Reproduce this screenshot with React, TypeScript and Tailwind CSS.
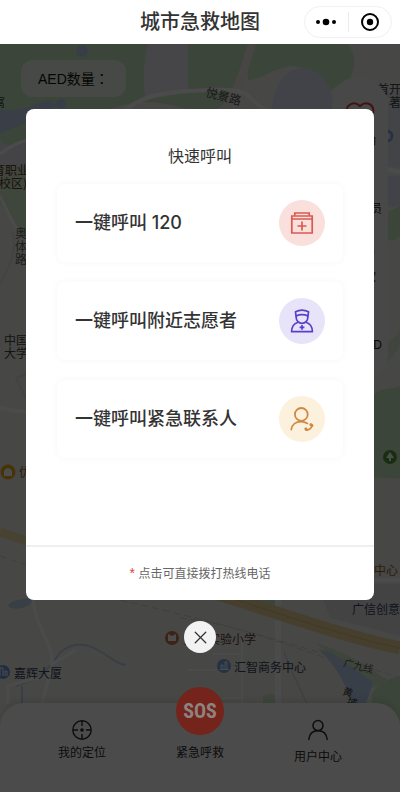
import { Heart, UserRound, Wallet, MapPin, X } from "lucide-react";

const Capsule = () => (
  <div className="mr-2 flex h-8 w-22 items-center justify-self-end rounded-full border border-[#f1f1f1] bg-white">
    <button aria-label="更多" className="flex flex-1 items-center justify-center">
      <svg width="20" height="8" viewBox="0 0 20 8" fill="#000">
        <circle cx="2" cy="4" r="2" />
        <circle cx="10" cy="4" r="3.3" />
        <circle cx="18" cy="4" r="2" />
      </svg>
    </button>
    <span className="h-5 w-px bg-[#ececec]" />
    <button aria-label="关闭小程序" className="flex flex-1 items-center justify-center">
      <svg width="20" height="20" viewBox="0 0 20 20">
        <circle cx="10" cy="10" r="8" fill="none" stroke="#000" strokeWidth="2" />
        <circle cx="10" cy="10" r="3.2" fill="#000" />
      </svg>
    </button>
  </div>
);

const CityMap = () => (
  <svg
    className="absolute inset-0 h-full w-full font-['Noto_Sans_CJK_SC',sans-serif]"
    viewBox="0 44 400 748"
    preserveAspectRatio="xMidYMin slice"
    fontSize="12"
    fill="#444"
  >
    <rect y="44" width="400" height="748" fill="#efeee8" />
    {/* parks */}
    <path d="M0 44H252C243 68 237 88 228 100C205 130 170 90 120 106C80 118 50 140 26 145L0 155Z" fill="#c9e8c0" />
    <path d="M254 44H348C356 54 356 70 350 78C340 82 334 88 330 92C322 84 308 66 292 66C272 68 262 80 248 80C246 68 250 54 254 44Z" fill="#c9e8c0" />
    <path d="M0 168L26 160V240C18 232 8 214 0 204Z" fill="#d3e9c9" />
    <path d="M384 214L400 206V236C392 244 386 240 384 232Z" fill="#c9e8c0" />
    <path d="M372 396C382 386 392 390 400 386V478C390 480 382 476 372 478Z" fill="#c9e8c0" />
    <path d="M372 348C382 342 390 346 400 330V344C394 360 382 366 372 370Z" fill="#d8eccf" />
    <path d="M240 597H275V605L250 602Z" fill="#c9e8c0" />
    <path d="M372 694C380 680 392 678 400 676V720H372Z" fill="#c9e8c0" />
    <path d="M316 643C340 650 368 664 388 682L373 688L340 664Z" fill="#cfe9c6" />
    <path d="M263 696Q269 692 275 695V708H263Z" fill="#d0eac6" />
    {/* blocks */}
    <path d="M148 44H188V92L146 100C142 80 144 60 148 44Z" fill="#e9ebf5" />
    <path d="M272 112C272 84 288 66 306 68C322 72 332 84 334 112Z" fill="#dcdff0" />
    <path d="M380 94L400 90V168L380 166Z" fill="#e0e5f2" />
    <path d="M384 176H400V206L384 208Z" fill="#dddff0" />
    <path d="M0 140C8 150 18 142 26 142V168L0 166Z" fill="#e4e5ee" />
    <path d="M318 584H400V636L330 618Z" fill="#e2e2e4" />
    {/* water */}
    <path d="M0 110C20 112 34 104 48 100L58 105C40 116 20 126 0 134Z" fill="#c3d1ec" />
    <circle cx="82" cy="51" r="6" fill="#bcd0ee" />
    <circle cx="61" cy="104" r="5" fill="#bcd0ee" />
    <path d="M8 605C14 598 24 600 34 598C30 608 20 610 10 608Z" fill="#bcd4ee" />
    <path d="M318 649L332 653L373 682L364 710H354C348 688 336 664 318 649Z" fill="#bdd2f2" />
    <path d="M16 686C34 680 46 674 56 658C66 642 84 642 98 650S116 664 126 665M22 686V704" fill="none" stroke="#bcd2ec" strokeWidth="2" />
    <path d="M284 652C292 674 300 688 308 706" fill="none" stroke="#ccd8ea" strokeWidth="1.5" />
    {/* roads */}
    <g fill="none" stroke="#fdfcfc" strokeWidth="4">
      <path d="M252 44C244 70 238 92 224 110" strokeWidth="8" stroke="#eeeae4" />
      <path d="M118 116C140 96 156 92 208 90S240 98 270 112" />
      <path d="M344 92L400 102" stroke="#f4f4f2" />
      <path d="M0 154C10 146 18 142 28 140M0 196C8 214 14 224 20 234" strokeWidth="3" />
      <path d="M0 408C10 410 18 412 28 411" />
      <path d="M372 166L400 172" />
      <path d="M33 598C34 624 54 646 52 664C50 676 46 686 42 704M52 664L76 650M8 704V686L50 674" strokeWidth="3" />
      <path d="M278 597V708" strokeWidth="6" />
      <path d="M188 670H216M242 640V708M212 654H242M222 698H242" strokeWidth="2" />
      <path d="M372 580H400" />
      <path d="M12 232C18 250 8 270 0 284M26 374L16 378L26 398" strokeWidth="2" stroke="#e0e0e0" />
    </g>
    <path d="M0 532L26 541" stroke="#efdda6" strokeWidth="9" />
    <path d="M205 590C265 608 340 636 400 648" fill="none" stroke="#ecd39a" strokeWidth="13" />
    <path d="M205 590C265 608 340 636 400 648" fill="none" stroke="#dfba74" strokeWidth="1" />
    <path d="M120 600C180 614 260 632 400 678M180 618C240 624 300 650 400 684M0 556L26 565" fill="none" stroke="#d2d2d2" strokeWidth="1" strokeDasharray="7 4" />
    {/* place names */}
    <text x="-7" y="107">寓</text>
    <text x="-7" y="175" fill="#5b392e">育职业</text>
    <text x="-5" y="188" fill="#5b392e">(校区)</text>
    <text x="15" y="238" fill="#666">奥</text>
    <text x="15" y="251" fill="#666">体</text>
    <text x="15" y="264" fill="#666">路</text>
    <text x="4" y="345">中国</text>
    <text x="4" y="358">大学</text>
    <text x="19" y="477" fill="#94642c">优</text>
    <text x="205" y="96" transform="rotate(15 205 96)" fill="#555">悦景路</text>
    <text x="377" y="94">首开</text>
    <text x="389" y="107">著</text>
    <text x="14" y="678" fill="#36435c">嘉辉大厦</text>
    <text x="184" y="644" fill="#573c32">天河实验小学</text>
    <text x="234" y="672" fill="#36435c">汇智商务中心</text>
    <text x="374" y="575" fill="#94642c">中心</text>
    <text x="352" y="614" fill="#36435c">广信创意</text>
    <text x="343" y="666" fontSize="10" transform="rotate(14 343 666)" fill="#555">广九线</text>
    <text x="342" y="694" fontSize="10" transform="rotate(20 342 694)">黄</text>
    <text x="346" y="704" fontSize="10" transform="rotate(20 346 704)">埔</text>
    {/* markers */}
    <circle cx="8" cy="472" r="7.5" fill="#f0ac20" />
    <path d="M4 476V471Q8 465 12 471V476Z" fill="#fff" />
    <circle cx="390" cy="457" r="7" fill="#4f9b38" />
    <path d="M390 452L394 458H391V461H389V458H386Z" fill="#fff" />
    <circle cx="172" cy="638" r="7" fill="#c5764e" />
    <path d="M168 634L172 636L176 634V641H168Z" fill="#fff" />
    <circle cx="3" cy="672" r="7" fill="#6d9be0" />
    <path d="M0 676V668H3V676M5 676V671H7V676" stroke="#fff" fill="none" />
    <circle cx="224" cy="666" r="7" fill="#7ca6e6" />
    <path d="M221 669V665H223V669M225 669V662H227V669M220 669.5H229" stroke="#fff" fill="none" />
    <circle cx="387" cy="136" r="5" fill="none" stroke="#86a6de" strokeWidth="3" />
  </svg>
);

const sideItems = [
  { label: "助", icon: Heart, color: "text-[#dc4040]", pad: "pr-3" },
  { label: "员", icon: UserRound, color: "text-[#5b45c9]", pad: "pr-1.5" },
  { label: "款", icon: Wallet, color: "text-[#d4924a]", pad: "pr-3" },
  { label: "D", icon: MapPin, color: "text-[#dc4040]", pad: "pr-1.5" },
];

const KitIcon = () => (
  <svg width="24" height="24" viewBox="0 0 24 24" fill="none" stroke="#da5a50" strokeWidth="1.7">
    <path d="M4.8 4.8V2H19.2V4.8" />
    <path d="M1.8 5H22.2V22H1.8ZM1.8 8H22.2" />
    <path d="M12 10.5V19.5M7.5 15H16.5" />
  </svg>
);

const NurseIcon = () => (
  <svg width="24" height="24" viewBox="0 0 24 24" fill="none" stroke="#5a3fcb" strokeWidth="1.7" strokeLinejoin="round">
    <path d="M6 7L5.5 2.8Q12 -.4 18.5 2.8L18 7Q12 4.2 6 7Z" />
    <path d="M6.2 7V8.5A5.8 5.8 0 0 0 17.8 8.5V7" />
    <path d="M8 13.2C4 14.5 1.6 18 1.6 22.7H22.4C22.4 18 20 14.5 16 13.2" />
    <path d="M12 15.9V20.7M9.6 18.3H14.4" />
  </svg>
);

const ContactIcon = () => (
  <svg width="24" height="24" viewBox="0 0 24 24" fill="none" stroke="#cf8a45" strokeWidth="1.8" strokeLinecap="round">
    <circle cx="11.3" cy="7.4" r="6.4" />
    <path d="M1.3 22.5C2 17.4 6 14.6 11 14.6Q14.6 14.6 17.4 16.4" />
    <path d="M22 18C22 21 19.5 23 16.4 22.8" />
    <path d="M20.8 17.6L22 18.6M15.8 21.8L16.8 23" strokeWidth="2.8" />
  </svg>
);

const calls = [
  { label: "一键呼叫 120", icon: KitIcon, tint: "bg-[#fae0dc]" },
  { label: "一键呼叫附近志愿者", icon: NurseIcon, tint: "bg-[#e7e3f9]" },
  { label: "一键呼叫紧急联系人", icon: ContactIcon, tint: "bg-[#fcf1dc]" },
];

const CallDialog = () => (
  <div role="dialog" aria-modal="true" aria-labelledby="call-title" className="self-stretch rounded-lg bg-white pt-9">
    <h2 id="call-title" className="text-center text-base leading-6 text-[#333]">快速呼叫</h2>
    <div className="mx-[31px] mt-[15px] flex flex-col gap-5">
      {calls.map(({ label, icon: Icon, tint }) => (
        <button
          key={label}
          className="flex h-[78px] items-center justify-between rounded-lg bg-white px-[18px] font-['Inter','Noto_Sans_CJK_SC',sans-serif] text-lg font-medium text-[#333] shadow-[0_0_7px_rgba(0,0,0,0.04)]"
        >
          {label}
          <span className={`flex size-[46px] items-center justify-center rounded-full ${tint}`}>
            <Icon />
          </span>
        </button>
      ))}
    </div>
    <p className="mt-[87px] border-t-2 border-[#efefef] py-4 text-center text-xs leading-5 text-[#666]">
      <span className="text-sm leading-5 text-[#d8453c]">*</span> 点击可直接拨打热线电话
    </p>
  </div>
);

const TabBar = () => (
  <nav className="relative mt-auto grid h-[89px] grid-cols-3 items-start rounded-t-3xl bg-[#fcfcfc] px-[23px] pt-4 text-xs leading-4 text-[#2c2c2c] shadow-[0_-2px_8px_rgba(0,0,0,0.12)]">
    <button className="flex flex-col items-center gap-1">
      <svg width="22" height="22" viewBox="0 0 22 22" fill="none" stroke="currentColor" strokeWidth="1.4">
        <circle cx="11" cy="11" r="9.2" />
        <path d="M11 2V7M11 15V20M2 11H7M15 11H20" />
        <circle cx="11" cy="11" r="1.8" fill="currentColor" stroke="none" />
      </svg>
      我的定位
    </button>
    <button className="-mt-8 flex flex-col items-center gap-2.5">
      <span className="relative z-10 flex size-12 items-center justify-center rounded-full bg-[#74241a] font-['Roboto_Condensed','Open_Sans_Condensed','Liberation_Sans_Narrow','Roboto',sans-serif] text-xl font-bold text-[#8d8380]">
        SOS
      </span>
      紧急呼救
    </button>
    <button className="flex flex-col items-center gap-2">
      <svg width="22" height="22" viewBox="0 0 22 22" fill="none" stroke="currentColor" strokeWidth="1.5" strokeLinecap="round">
        <circle cx="11" cy="6.6" r="5" />
        <path d="M1.8 20.5C2.4 15 6 11.8 11 11.8S19.6 15 20.2 20.5" />
      </svg>
      用户中心
    </button>
  </nav>
);

export default function App() {
  return (
    <div className="flex min-h-screen flex-col bg-white font-['Liberation_Sans','Noto_Sans_CJK_SC',sans-serif]">
      <header className="grid h-11 grid-cols-[1fr_auto_1fr] items-center">
        <h1 className="col-start-2 text-xl font-medium text-[#333]">城市急救地图</h1>
        <Capsule />
      </header>

      <main className="relative flex flex-1 flex-col overflow-hidden">
        <CityMap />
        <div className="relative flex items-start justify-between pt-4 pr-3 pl-[21px]">
          <div className="rounded-xl bg-white/60 px-[17px] py-2 text-sm leading-5 text-[#111]">
            AED数量<span className="font-['Noto_Sans_CJK_TC',sans-serif]">：</span>
          </div>
          <aside className="mt-[18px] flex w-14 flex-col gap-[17px] rounded-full bg-[#f1f1f1] pt-5 pb-[29px] text-xs leading-4 text-[#222]">
            {sideItems.map(({ label, icon: Icon, color, pad }) => (
              <button key={label} className="flex flex-col items-center gap-[3px]">
                <Icon className={color} size={32} strokeWidth={1.5} />
                <span className={`self-end ${pad}`}>{label}</span>
              </button>
            ))}
          </aside>
        </div>
        <TabBar />

        <div className="absolute inset-0 flex flex-col items-center gap-[21px] bg-black/70 px-[26px] pt-[65px]">
          <CallDialog />
          <button aria-label="关闭" className="flex size-8 items-center justify-center rounded-full bg-[#f2f2f2] text-[#333]">
            <X size={21} strokeWidth={1.5} />
          </button>
        </div>
      </main>
    </div>
  );
}
